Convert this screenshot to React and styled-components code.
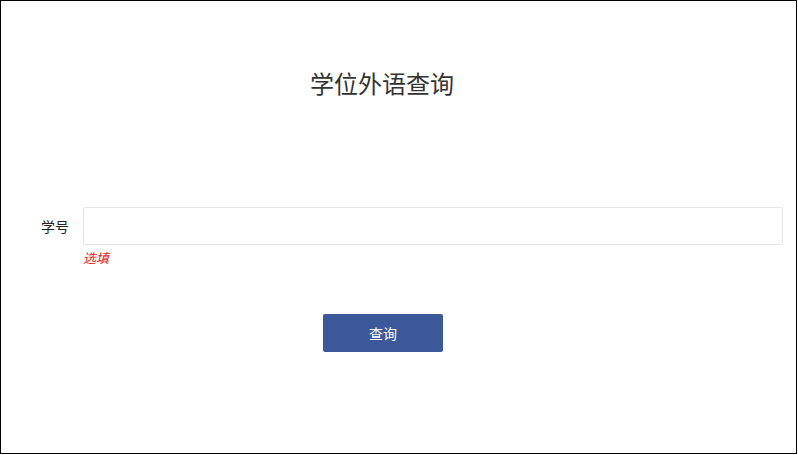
import styled, { createGlobalStyle } from 'styled-components'

const GlobalStyle = createGlobalStyle`
 body {
  margin: 0;
  background: #fff;
  font-family: 'Noto Sans CJK SC', 'Noto Sans', sans-serif;
 }
`

const Frame = styled.div`
 box-sizing: border-box;
 width: 797px;
 height: 454px;
 border: 1px solid #000;
 background: #fff;
`

const Title = styled.h1`
 width: 762px;
 margin: 0;
 padding-top: 65px;
 font-size: 24px;
 line-height: 34px;
 font-weight: normal;
 color: #333;
 text-align: center;
`

const Form = styled.form`
 margin-top: 107px;
`

const Row = styled.div`
 display: flex;
 align-items: center;
 padding-right: 13px;
`

const Label = styled.label`
 box-sizing: border-box;
 width: 82px;
 padding-right: 14px;
 text-align: right;
 font-size: 14px;
 color: #222;
`

const Input = styled.input`
 flex: 1;
 box-sizing: border-box;
 height: 38px;
 border: 1px solid #e6e6e6;
 border-radius: 2px;
 padding: 0 10px;
 font-size: 14px;
 outline: none;
`

const Hint = styled.div`
 margin: 3px 0 0 82px;
 font-size: 13px;
 line-height: 20px;
 font-style: italic;
 color: #e02020;
`

const Actions = styled.div`
 width: 764px;
 display: flex;
 justify-content: center;
 margin-top: 46px;
`

const SubmitButton = styled.button`
 width: 120px;
 height: 38px;
 border: none;
 border-radius: 2px;
 background-color: #3b5998;
 color: #fff;
 font-size: 14px;
 font-family: inherit;
 cursor: pointer;
`

function App() {
 const submitHandler = (event) => {
  event.preventDefault()
 }

 return (
  <>
   <GlobalStyle />
   <Frame>
    <Title>学位外语查询</Title>
    <Form onSubmit={submitHandler}>
     <Row>
      <Label htmlFor='xh'>学号</Label>
      <Input type='text' id='xh' name='xh' />
     </Row>
     <Hint>选填</Hint>
     <Actions>
      <SubmitButton type='submit'>查询</SubmitButton>
     </Actions>
    </Form>
   </Frame>
  </>
 )
}

export default App
